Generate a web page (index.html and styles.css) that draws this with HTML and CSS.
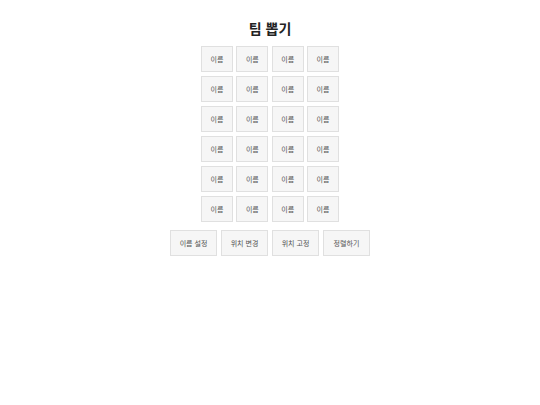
FILE: index.html
```html
<!DOCTYPE html>
<html lang="ko">
<head>
  <meta charset="UTF-8" />
  <title>팀 뽑기</title>
  <link rel="stylesheet" href="styles.css">
</head>
<body>

<h1 class="title">팀 뽑기</h1>

<div class="seats" id="seats"></div>

<div class="controls">
  <button class="ctrl-btn">이름 설정</button>
  <button class="ctrl-btn">위치 변경</button>
  <button class="ctrl-btn">위치 고정</button>
  <button class="ctrl-btn">정렬하기</button>
</div>

<script>
const seats = document.getElementById("seats");
for (let i = 0; i < 24; i++) {
  const b = document.createElement("button");
  b.className = "seat";
  b.innerText = "이름";
  seats.appendChild(b);
}
</script>

</body>
</html>
```

FILE: styles.css
```css
body {
  margin: 0;
  font-family: "Noto Sans CJK KR", "Noto Sans", sans-serif;
  background: #fff;
  color: #222;
}
.title {
  margin: 0;
  padding-top: 18px;
  height: 28px;
  font-size: 14px;
  line-height: 20px;
  text-align: center;
  font-weight: bold;
}
.seats {
  display: grid;
  grid-template-columns: repeat(4, 32px);
  grid-auto-rows: 26px;
  column-gap: 3.3px;
  row-gap: 4px;
  justify-content: center;
}
.seat, .ctrl-btn {
  margin: 0;
  padding: 0;
  background: #f6f6f6;
  border: 1px solid #e0e0e0;
  color: #555;
  font-family: "Noto Sans CJK KR", sans-serif;
  font-size: 7px;
  cursor: pointer;
}
.controls {
  display: flex;
  justify-content: center;
  gap: 4px;
  margin-top: 8px;
}
.ctrl-btn {
  width: 47px;
  height: 26px;
}
```
